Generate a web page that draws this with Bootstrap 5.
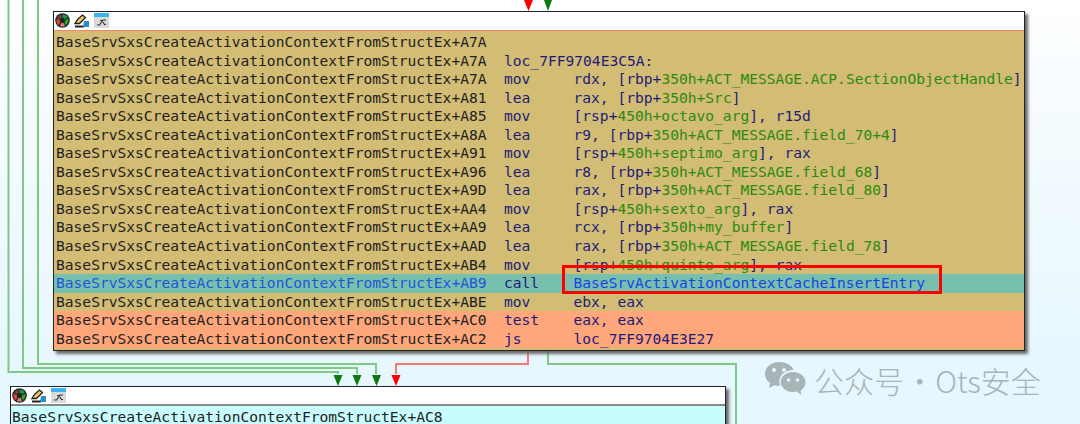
<!DOCTYPE html>
<html lang="en"><head><meta charset="utf-8"><title>IDA graph view</title>
<link rel="stylesheet" href="https://cdn.jsdelivr.net/npm/bootstrap@5.3.0/dist/css/bootstrap.min.css">
<style>
html,body{height:424px;overflow:hidden}
body{background:linear-gradient(180deg,#fff 0,#f6fcff 100px,#e6f7ff 380px);position:relative;width:1080px}
.edges{position:absolute;left:0;top:0}
.gnode{position:absolute;background:#fff;border:1px solid #222;box-shadow:3px 3px 3px #666;font-family:"DejaVu Sans Mono",monospace;font-size:14.6px;line-height:18.56px;color:#222;white-space:nowrap}
.node-main{left:53px;top:11px;width:972px;height:340px}
.node-next{left:10px;top:386px;width:716px;height:38px;border-bottom:0;overflow:visible}
.tbar{height:19px;padding:1px 0 0 1px;gap:4px;border-bottom:1px solid #ee8866}
.node-next .tbar{border-bottom:2px solid #888;height:19px}
.tbar svg{display:block}
.gold{background:#d3bc74;padding:2px 0 0 2px;height:319px}
.cyan{background:#c8fcff;padding:2px 0 0 1px;height:18px;overflow:hidden}
.asm{height:18.56px}
.ad{width:448px;flex:none}
.mn{width:69.5px;flex:none;color:#1c1c78}
.op{color:#1c1c78}
.sy{color:#2c8a10}
.hl{background:#78c0ae;margin:0 0 0 -2px;padding-left:2px}
.hl .ad{color:#1f55d8}
.hl .op{color:#1f3fe0}
.or{background:#ffa67a;margin-left:-2px;padding-left:2px}
.redbox{position:absolute;left:562px;top:265px;width:380px;height:29px;border:3px solid #f00}
.wm{position:absolute;left:764px;top:359px;gap:8px;color:#a9b4b6}
.wm-t{font-family:"Noto Sans CJK SC","Noto Sans",sans-serif;font-size:30px;line-height:42px;font-weight:300;word-spacing:-6px;white-space:pre}
</style></head>
<body>
<svg class="edges" width="1080" height="424" viewBox="0 0 1080 424" fill="none">
 <g stroke="#82c885" stroke-width="2">
  <path d="M8.500 0V372H338V374"/><path d="M23 0V368H357V374"/><path d="M38 0V364H376V374"/>
  <path d="M548 350V364H736V424"/>
 </g>
 <path d="M528 350V364H396V374" stroke="#f47a7a" stroke-width="2"/>
 <g fill="#0a7a0a"><path d="M544 0h8l-4 11z"/><path d="M333.500 375h9l-4.500 11z"/><path d="M352.500 375h9l-4.500 11z"/><path d="M372 375h9l-4.500 11z"/></g>
 <g fill="#f00"><path d="M524 0h9l-4.500 11z"/><path d="M391.500 375h9l-4.500 11z"/></g>
</svg>

<div class="gnode node-main">
 <div class="tbar d-flex align-items-start">
  <svg width="15" height="15" viewBox="0 0 15 15"><circle cx="7.500" cy="7.500" r="7.300" fill="#1c2a22"/><path d="M7.500 1.500a6 6 0 0 1 5.200 3L7.500 7.500z" fill="#1f9a4a"/><path d="M13.300 6a6 6 0 0 1-2.300 6L7.500 7.500z" fill="#2aa82a"/><path d="M10 13a6 6 0 0 1-5 0L7.500 7.500z" fill="#ee7a7a"/><path d="M3.500 12A6 6 0 0 1 1.700 6L7.500 7.500z" fill="#e0443a"/><path d="M2 5A6 6 0 0 1 6 1.500L7.500 7.500z" fill="#7c3a3a"/><circle cx="7.500" cy="7.500" r="2.700" fill="#1c2a22"/></svg>
  <svg width="16" height="15" viewBox="0 0 16 15"><path d="M1 10.500 3.500 6.500 8.500 2 11.500 4.500 5.500 10.500z" fill="#edc85c" stroke="#222" stroke-width="1.300"/><path d="M1 13.500h9" stroke="#222" stroke-width="2"/><path d="M10 8h5v6h-6z" fill="#2a8fc8"/></svg>
  <svg width="15" height="15" viewBox="0 0 15 15"><rect width="15" height="15" fill="#dadada"/><rect width="15" height="4" fill="#3ab4ec"/><path d="M3 12h2.500l3.500-5h3M6 7.500h2l2.500 4H12" stroke="#333" fill="none" stroke-width="1.200"/></svg>
 </div>
 <div class="gold">
<div class="asm d-flex"><span class="ad">BaseSrvSxsCreateActivationContextFromStructEx+A7A</span></div>
<div class="asm d-flex"><span class="ad">BaseSrvSxsCreateActivationContextFromStructEx+A7A</span><span class="mn">loc_7FF9704E3C5A:</span></div>
<div class="asm d-flex"><span class="ad">BaseSrvSxsCreateActivationContextFromStructEx+A7A</span><span class="mn">mov</span><span class="op">rdx, [rbp+<span class="sy">350h+ACT_MESSAGE.ACP.SectionObjectHandle</span>]</span></div>
<div class="asm d-flex"><span class="ad">BaseSrvSxsCreateActivationContextFromStructEx+A81</span><span class="mn">lea</span><span class="op">rax, [rbp+<span class="sy">350h+Src</span>]</span></div>
<div class="asm d-flex"><span class="ad">BaseSrvSxsCreateActivationContextFromStructEx+A85</span><span class="mn">mov</span><span class="op">[rsp+<span class="sy">450h+octavo_arg</span>], r15d</span></div>
<div class="asm d-flex"><span class="ad">BaseSrvSxsCreateActivationContextFromStructEx+A8A</span><span class="mn">lea</span><span class="op">r9, [rbp+<span class="sy">350h+ACT_MESSAGE.field_70+4</span>]</span></div>
<div class="asm d-flex"><span class="ad">BaseSrvSxsCreateActivationContextFromStructEx+A91</span><span class="mn">mov</span><span class="op">[rsp+<span class="sy">450h+septimo_arg</span>], rax</span></div>
<div class="asm d-flex"><span class="ad">BaseSrvSxsCreateActivationContextFromStructEx+A96</span><span class="mn">lea</span><span class="op">r8, [rbp+<span class="sy">350h+ACT_MESSAGE.field_68</span>]</span></div>
<div class="asm d-flex"><span class="ad">BaseSrvSxsCreateActivationContextFromStructEx+A9D</span><span class="mn">lea</span><span class="op">rax, [rbp+<span class="sy">350h+ACT_MESSAGE.field_80</span>]</span></div>
<div class="asm d-flex"><span class="ad">BaseSrvSxsCreateActivationContextFromStructEx+AA4</span><span class="mn">mov</span><span class="op">[rsp+<span class="sy">450h+sexto_arg</span>], rax</span></div>
<div class="asm d-flex"><span class="ad">BaseSrvSxsCreateActivationContextFromStructEx+AA9</span><span class="mn">lea</span><span class="op">rcx, [rbp+<span class="sy">350h+my_buffer</span>]</span></div>
<div class="asm d-flex"><span class="ad">BaseSrvSxsCreateActivationContextFromStructEx+AAD</span><span class="mn">lea</span><span class="op">rax, [rbp+<span class="sy">350h+ACT_MESSAGE.field_78</span>]</span></div>
<div class="asm d-flex"><span class="ad">BaseSrvSxsCreateActivationContextFromStructEx+AB4</span><span class="mn">mov</span><span class="op">[rsp+<span class="sy">450h+quinto_arg</span>], rax</span></div>
<div class="asm d-flex hl"><span class="ad">BaseSrvSxsCreateActivationContextFromStructEx+AB9</span><span class="mn">call</span><span class="op">BaseSrvActivationContextCacheInsertEntry</span></div>
<div class="asm d-flex"><span class="ad">BaseSrvSxsCreateActivationContextFromStructEx+ABE</span><span class="mn">mov</span><span class="op">ebx, eax</span></div>
<div class="asm d-flex or"><span class="ad">BaseSrvSxsCreateActivationContextFromStructEx+AC0</span><span class="mn">test</span><span class="op">eax, eax</span></div>
<div class="asm d-flex or"><span class="ad">BaseSrvSxsCreateActivationContextFromStructEx+AC2</span><span class="mn">js</span><span class="op">loc_7FF9704E3E27</span></div>
 </div>
</div>

<div class="gnode node-next">
 <div class="tbar d-flex align-items-start">
  <svg width="15" height="15" viewBox="0 0 15 15"><circle cx="7.500" cy="7.500" r="7.300" fill="#1c2a22"/><path d="M7.500 1.500a6 6 0 0 1 5.200 3L7.500 7.500z" fill="#1f9a4a"/><path d="M13.300 6a6 6 0 0 1-2.300 6L7.500 7.500z" fill="#2aa82a"/><path d="M10 13a6 6 0 0 1-5 0L7.500 7.500z" fill="#ee7a7a"/><path d="M3.500 12A6 6 0 0 1 1.700 6L7.500 7.500z" fill="#e0443a"/><path d="M2 5A6 6 0 0 1 6 1.500L7.500 7.500z" fill="#7c3a3a"/><circle cx="7.500" cy="7.500" r="2.700" fill="#1c2a22"/></svg>
  <svg width="16" height="15" viewBox="0 0 16 15"><path d="M1 10.500 3.500 6.500 8.500 2 11.500 4.500 5.500 10.500z" fill="#edc85c" stroke="#222" stroke-width="1.300"/><path d="M1 13.500h9" stroke="#222" stroke-width="2"/><path d="M10 8h5v6h-6z" fill="#2a8fc8"/></svg>
  <svg width="15" height="15" viewBox="0 0 15 15"><rect width="15" height="15" fill="#dadada"/><rect width="15" height="4" fill="#3ab4ec"/><path d="M3 12h2.500l3.500-5h3M6 7.500h2l2.500 4H12" stroke="#333" fill="none" stroke-width="1.200"/></svg>
 </div>
 <div class="cyan">BaseSrvSxsCreateActivationContextFromStructEx+AC8</div>
</div>

<div class="redbox"></div>

<div class="wm d-flex align-items-center">
 <svg width="42" height="38" viewBox="0 0 42 38"><path d="M15 1C7 1 1 6.500 1 13c0 3.700 2 7 5 9.200L5 27l5.500-2.800c1.500.4 3 .6 4.500.6h1.200C15.600 23 15.300 21.800 15.300 20.500c0-6.500 6-11.500 13.500-11.500h.8C27.800 4.300 22 1 15 1z" fill="#a9b4b6"/><path d="M29 11c-6.800 0-12.300 4.500-12.300 10s5.500 10 12.300 10c1.300 0 2.600-.2 3.800-.5L37.500 34l-1-4.300c3-1.900 5-5 5-8.700 0-5.500-5.700-10-12.500-10z" fill="#a9b4b6"/><circle cx="10" cy="9" r="2" fill="#e6f7ff"/><circle cx="20" cy="9" r="2" fill="#e6f7ff"/><circle cx="24.500" cy="19" r="1.800" fill="#e6f7ff"/><circle cx="33.500" cy="19" r="1.800" fill="#e6f7ff"/></svg>
 <span class="wm-t">公众号 · Ots安全</span>
</div>
</body></html>
